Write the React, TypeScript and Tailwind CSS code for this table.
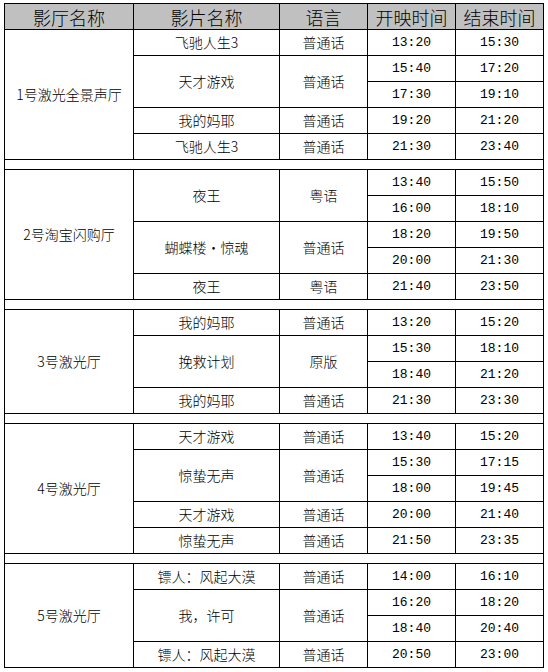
import React from "react";

type Row = {
  film?: string;
  span?: number;
  lang?: string;
  start: string;
  end: string;
};

type Group = { hall: string; rows: Row[] };

const groups: Group[] = [
  {
    hall: "1号激光全景声厅",
    rows: [
      { film: "飞驰人生3", lang: "普通话", start: "13:20", end: "15:30" },
      { film: "天才游戏", span: 2, lang: "普通话", start: "15:40", end: "17:20" },
      { start: "17:30", end: "19:10" },
      { film: "我的妈耶", lang: "普通话", start: "19:20", end: "21:20" },
      { film: "飞驰人生3", lang: "普通话", start: "21:30", end: "23:40" },
    ],
  },
  {
    hall: "2号淘宝闪购厅",
    rows: [
      { film: "夜王", span: 2, lang: "粤语", start: "13:40", end: "15:50" },
      { start: "16:00", end: "18:10" },
      { film: "蝴蝶楼・惊魂", span: 2, lang: "普通话", start: "18:20", end: "19:50" },
      { start: "20:00", end: "21:30" },
      { film: "夜王", lang: "粤语", start: "21:40", end: "23:50" },
    ],
  },
  {
    hall: "3号激光厅",
    rows: [
      { film: "我的妈耶", lang: "普通话", start: "13:20", end: "15:20" },
      { film: "挽救计划", span: 2, lang: "原版", start: "15:30", end: "18:10" },
      { start: "18:40", end: "21:20" },
      { film: "我的妈耶", lang: "普通话", start: "21:30", end: "23:30" },
    ],
  },
  {
    hall: "4号激光厅",
    rows: [
      { film: "天才游戏", lang: "普通话", start: "13:40", end: "15:20" },
      { film: "惊蛰无声", span: 2, lang: "普通话", start: "15:30", end: "17:15" },
      { start: "18:00", end: "19:45" },
      { film: "天才游戏", lang: "普通话", start: "20:00", end: "21:40" },
      { film: "惊蛰无声", lang: "普通话", start: "21:50", end: "23:35" },
    ],
  },
  {
    hall: "5号激光厅",
    rows: [
      { film: "镖人：风起大漠", lang: "普通话", start: "14:00", end: "16:10" },
      { film: "我，许可", span: 2, lang: "普通话", start: "16:20", end: "18:20" },
      { start: "18:40", end: "20:40" },
      { film: "镖人：风起大漠", lang: "普通话", start: "20:50", end: "23:00" },
    ],
  },
];

const spanCls: Record<number, string> = {
  1: "",
  2: "row-span-2",
  4: "row-span-4",
  5: "row-span-5",
};

const cjk = "font-['Noto_Sans_CJK_SC','Noto_Sans',sans-serif] font-light";
const mono = "font-['Liberation_Mono','Noto_Sans_CJK_SC',monospace]";

const cell =
  "border-r border-b border-black flex items-center justify-center text-black";

export default function App() {
  const headers = ["影厅名称", "影片名称", "语言", "开映时间", "结束时间"];
  return (
    <div className="w-[548px] h-[672px] bg-white overflow-hidden">
      <div className="ml-[4px] mt-[3px] w-[540px] border-l border-t border-black grid grid-cols-[129px_146px_88px_88px_88px]">
        {headers.map((h) => (
          <div
            key={h}
            className={`${cell} h-[26px] bg-[#c0c0c0] text-[18px] leading-none ${cjk} text-[#1a1a1a]`}
          >
            {h}
          </div>
        ))}
        {groups.map((g, gi) => (
          <React.Fragment key={gi}>
            {gi > 0 && (
              <div className="col-span-5 h-[10px] border-r border-b border-black" />
            )}
            <div
              className={`${cell} ${spanCls[g.rows.length]} text-[14px] ${cjk}`}
            >
              {g.hall}
            </div>
            {g.rows.map((r, ri) => (
              <React.Fragment key={ri}>
                {r.film && (
                  <div
                    className={`${cell} ${spanCls[r.span ?? 1]} ${r.span ? "" : "h-[26px]"} text-[14px] ${cjk}`}
                  >
                    {r.film}
                  </div>
                )}
                {r.lang && (
                  <div
                    className={`${cell} ${spanCls[r.span ?? 1]} text-[14px] ${cjk}`}
                  >
                    {r.lang}
                  </div>
                )}
                <div className={`${cell} h-[26px] text-[13px] ${mono}`}>
                  {r.start}
                </div>
                <div className={`${cell} h-[26px] text-[13px] ${mono}`}>
                  {r.end}
                </div>
              </React.Fragment>
            ))}
          </React.Fragment>
        ))}
      </div>
    </div>
  );
}
